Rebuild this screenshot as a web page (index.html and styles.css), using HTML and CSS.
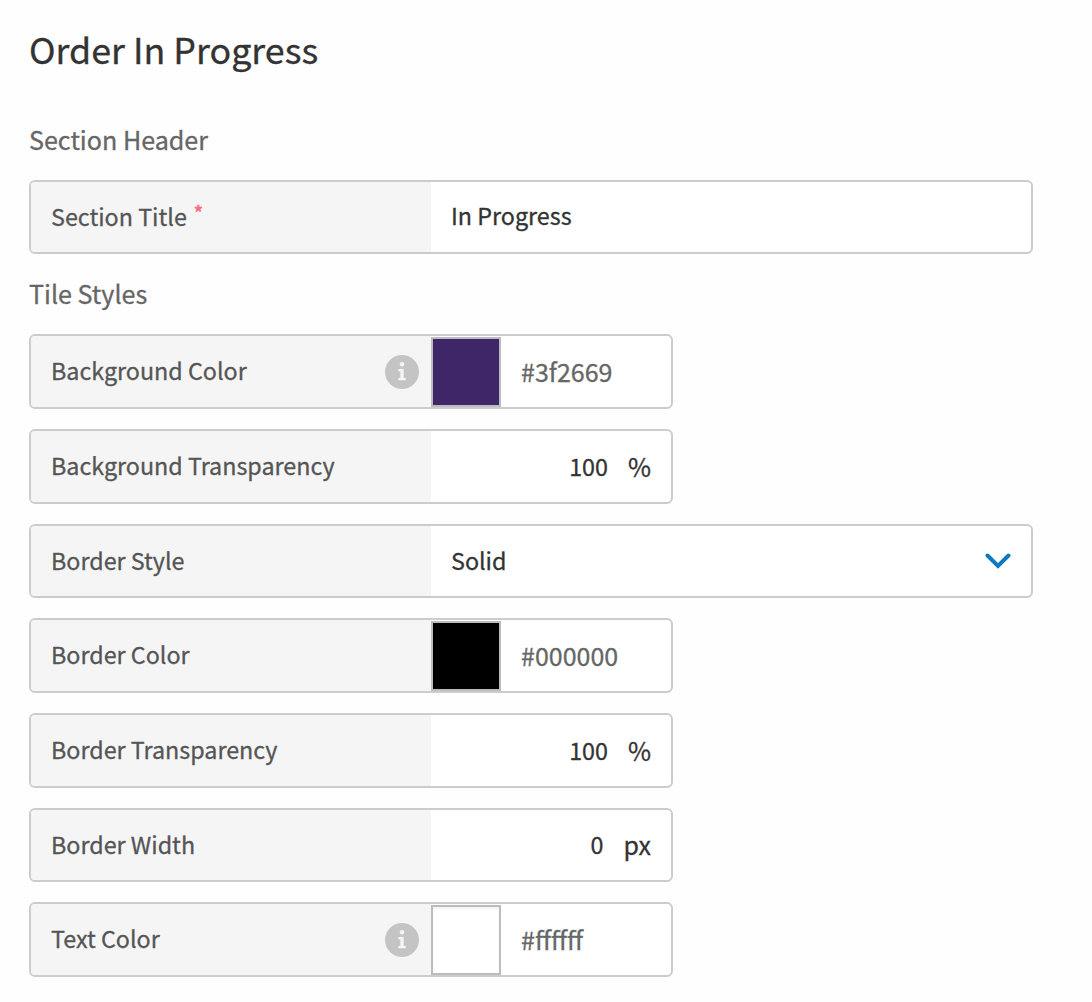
FILE: index.html
```html
<!DOCTYPE html>
<html lang="en">
  <head>
    <meta charset="UTF-8" />
    <meta name="viewport" content="width=device-width, initial-scale=1.0" />
    <title>Order In Progress</title>
    <link rel="stylesheet" href="styles.css">
  </head>
  <body>
    <h1>Order In Progress</h1>

    <h2>Section Header</h2>
    <div class="fields">
      <div class="field wide">
        <div class="label">Section Title<span class="required">*</span></div>
        <div class="value">In Progress</div>
      </div>
    </div>

    <h2 class="tile-heading">Tile Styles</h2>
    <div class="fields">
      <div class="field">
        <div class="label">
          Background Color
          <svg class="info" viewBox="0 0 34 34"><circle cx="17" cy="17" r="17" /><path d="M13.3 14H18.7V23H20.8V25.3H13.3V23H15.3V16.3H13.3Z" /><circle class="dot" cx="17" cy="9.3" r="2.2" /></svg>
        </div>
        <div class="swatch purple"></div>
        <div class="value hex">#3f2669</div>
      </div>
      <div class="field">
        <div class="label">Background Transparency</div>
        <div class="value number">100<span class="unit">%</span></div>
      </div>
      <div class="field wide">
        <div class="label">Border Style</div>
        <div class="value select">
          Solid
          <svg class="chevron" viewBox="0 0 26 16"><path d="M2.5 2.5L13 13L23.5 2.5" /></svg>
        </div>
      </div>
      <div class="field">
        <div class="label">Border Color</div>
        <div class="swatch black"></div>
        <div class="value hex">#000000</div>
      </div>
      <div class="field">
        <div class="label">Border Transparency</div>
        <div class="value number">100<span class="unit">%</span></div>
      </div>
      <div class="field">
        <div class="label">Border Width</div>
        <div class="value number">0<span class="unit">px</span></div>
      </div>
      <div class="field">
        <div class="label">
          Text Color
          <svg class="info" viewBox="0 0 34 34"><circle cx="17" cy="17" r="17" /><path d="M13.3 14H18.7V23H20.8V25.3H13.3V23H15.3V16.3H13.3Z" /><circle class="dot" cx="17" cy="9.3" r="2.2" /></svg>
        </div>
        <div class="swatch white"></div>
        <div class="value hex">#ffffff</div>
      </div>
    </div>
  </body>
</html>
```
FILE: styles.css
```css
* {
  box-sizing: border-box;
}
body {
  font-family: "Noto Sans CJK SC", "Noto Sans", sans-serif;
  -webkit-text-stroke: 0.3px;
  background-color: #fefefe;
  color: #333333;
  margin: 0;
  padding: 23px 29px 0;
}
h1 {
  font-size: 35.8px;
  font-weight: 400;
  line-height: 50px;
  margin: 0 0 46px;
}
h2 {
  font-size: 25.1px;
  font-weight: 400;
  line-height: 40px;
  color: #666666;
  margin: 0 0 20.6px;
}
.tile-heading {
  margin-top: 19px;
  margin-bottom: 21.04px;
}
.fields {
  display: flex;
  flex-direction: column;
  gap: 20px;
}
.field {
  display: flex;
  align-items: stretch;
  width: 644px;
  height: 74.67px;
  border: 2px solid #cccccc;
  border-radius: 6px;
  background-color: #fff;
  overflow: hidden;
}
.wide {
  width: 1004px;
}
.label {
  display: flex;
  align-items: center;
  flex: 0 0 400px;
  padding: 0 12px 2.4px 20px;
  background-color: #f5f5f5;
  color: #555555;
  font-size: 23.3px;
  line-height: 36px;
}
.required {
  color: #ff6b81;
  font-size: 20px;
  line-height: 20px;
  margin: 0 0 6px 7px;
  -webkit-text-stroke: 0.7px;
}
.info {
  width: 34px;
  height: 34px;
  margin: 2.4px 0 0 auto;
  fill: #c4c4c4;
  stroke: none;
}
.info path, .info .dot {
  fill: #f5f5f5;
}
.value {
  display: flex;
  align-items: center;
  flex: 1;
  padding: 0 20px 3px;
  font-size: 23.3px;
  line-height: 36px;
}
.number {
  justify-content: flex-end;
  padding-bottom: 1px;
}
.unit {
  font-size: 25px;
  margin-left: 20px;
}
.select {
  justify-content: space-between;
  padding-bottom: 2.4px;
}
.chevron {
  width: 26px;
  height: 16px;
  margin-top: 2px;
  fill: none;
  stroke: #0f79be;
  stroke-width: 4;
  stroke-linecap: round;
}
.hex {
  color: #666666;
  font-size: 25px;
  padding-bottom: 2px;
}
.swatch {
  align-self: flex-end;
  width: 70px;
  height: 70px;
  border: 2px solid #bbbbc0;
}
.purple {
  background-color: #3f2669;
}
.black {
  background-color: #000000;
}
.white {
  background-color: #ffffff;
  box-shadow: inset 0 2px 2px #f4f4f4;
}
```
